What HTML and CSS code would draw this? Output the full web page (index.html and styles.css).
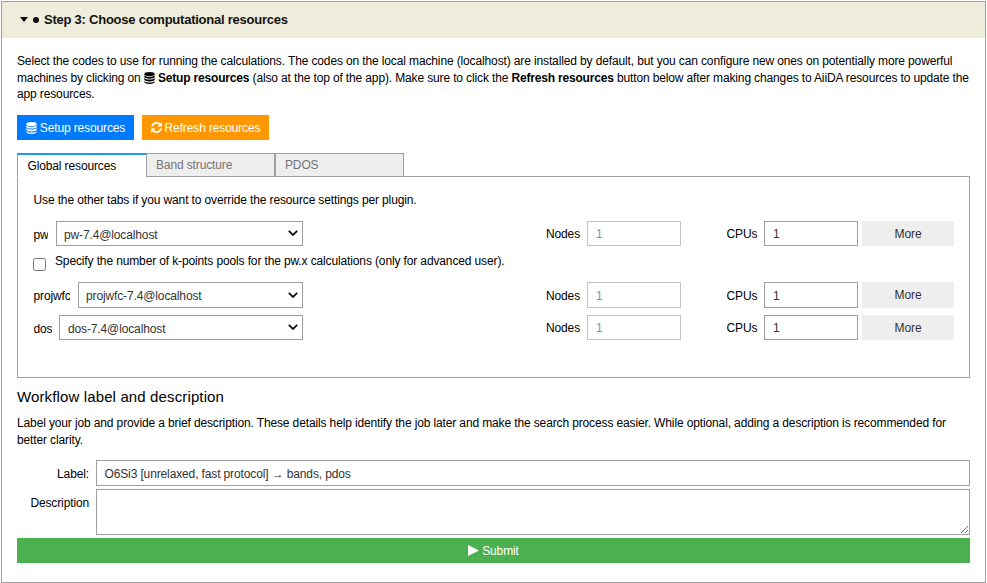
FILE: index.html
```html
<!DOCTYPE html>
<html lang="en">
<head>
<meta charset="utf-8">
<title>Step 3: Choose computational resources</title>
<link rel="stylesheet" href="styles.css">
</head>
<body>
<svg width="0" height="0" class="sprite" aria-hidden="true">
  <symbol id="database" viewBox="0 0 12 12" preserveAspectRatio="none">
    <ellipse cx="6" cy="2" rx="5.7" ry="2"/>
    <path d="M.3 3.3C2 5.3 10 5.3 11.700 3.300V4.900C11 7.200 1 7.200.3 4.900zM.3 6.100C2 8.100 10 8.100 11.700 6.100V7.700C11 10 1 10 .3 7.700zM.3 8.900C2 10.900 10 10.900 11.700 8.900V10C11 12.600 1 12.600.3 10z"/>
  </symbol>
  <symbol id="refresh" viewBox="0 0 1536 1536">
    <path d="M1511 928q0 5-1 7-64 268-268 434.500T764 1536q-146 0-282.500-55T238 1324l-129 129q-19 19-45 19t-45-19-19-45V960q0-26 19-45t45-19h448q26 0 45 19t19 45-19 45l-137 137q71 66 161 102t187 36q134 0 250-65t186-179q11-17 53-117 8-23 30-23h192q13 0 22.500 9.500t9.500 22.500zM1536 128v448q0 26-19 45t-45 19h-448q-26 0-45-19t-19-45 19-45l138-138Q969 256 768 256q-134 0-250 65T332 500q-11 17-53 117-8 23-30 23H50q-13 0-22.500-9.500T18 608v-7q65-268 270-434.500T768 0q146 0 284 55.500T1297 212l130-129q19-19 45-19t45 19 19 45z"/>
  </symbol>
  <symbol id="chevron" viewBox="0 0 10 6">
    <path d="M.8.8 5 5 9.200.8" fill="none" stroke="#111" stroke-width="1.800"/>
  </symbol>
</svg>
<section class="step">
  <header class="step-head">
    <svg class="caret" viewBox="0 0 8 5"><path d="M0 0h8L4 5z"/></svg>
    <span class="dot"></span>
    <span class="title">Step 3: Choose computational resources</span>
  </header>
  <div class="step-body">
    <p class="intro">
      <span class="line">Select the codes to use for running the calculations. The codes on the local machine (localhost) are installed by default, but you can configure new ones on potentially more powerful</span>
      <span class="line second">machines by clicking on <svg class="db"><use href="#database"/></svg> <b>Setup resources</b> (also at the top of the app). Make sure to click the <b>Refresh resources</b> button below after making changes to AiiDA resources to update the</span>
      <span class="line">app resources.</span>
    </p>
    <div class="actions">
      <button class="btn blue"><svg class="db"><use href="#database"/></svg><span>Setup resources</span></button>
      <button class="btn orange"><svg class="rf"><use href="#refresh"/></svg><span>Refresh resources</span></button>
    </div>
    <div class="tabs">
      <div class="tab active">Global resources</div>
      <div class="tab">Band structure</div>
      <div class="tab">PDOS</div>
    </div>
    <div class="panel">
      <p class="hint">Use the other tabs if you want to override the resource settings per plugin.</p>
      <div class="row">
        <div class="code"><label class="l-pw">pw</label><div class="pick"><select><option>pw-7.4@localhost</option></select><svg class="chev"><use href="#chevron"/></svg></div></div>
        <label class="nodes">Nodes</label><input class="num" value="1" disabled>
        <label class="cpus">CPUs</label><input class="num" value="1">
        <button class="more">More</button>
      </div>
      <div class="check"><input type="checkbox"><span>Specify the number of k-points pools for the pw.x calculations (only for advanced user).</span></div>
      <div class="row tall">
        <div class="code"><label class="l-projwfc">projwfc</label><div class="pick"><select><option>projwfc-7.4@localhost</option></select><svg class="chev"><use href="#chevron"/></svg></div></div>
        <label class="nodes">Nodes</label><input class="num" value="1" disabled>
        <label class="cpus">CPUs</label><input class="num" value="1">
        <button class="more">More</button>
      </div>
      <div class="row last">
        <div class="code"><label class="l-dos">dos</label><div class="pick"><select><option>dos-7.4@localhost</option></select><svg class="chev"><use href="#chevron"/></svg></div></div>
        <label class="nodes">Nodes</label><input class="num" value="1" disabled>
        <label class="cpus">CPUs</label><input class="num" value="1">
        <button class="more">More</button>
      </div>
    </div>
    <h4>Workflow label and description</h4>
    <p class="about">
      <span class="line">Label your job and provide a brief description. These details help identify the job later and make the search process easier. While optional, adding a description is recommended for</span>
      <span class="line">better clarity.</span>
    </p>
    <div class="field"><label>Label:</label><input value="O6Si3 [unrelaxed, fast protocol] → bands, pdos"></div>
    <div class="field area"><label>Description</label><textarea></textarea></div>
    <button class="submit"><svg class="play" viewBox="0 0 11 11"><path d="M0 0 11 5.500 0 11z"/></svg><span>Submit</span></button>
  </div>
</section>
</body>
</html>
```
FILE: styles.css
```css
* { box-sizing: border-box; }
body { margin: 0; background: #fff; color: #000; font: 12px/17px "Liberation Sans", Arial, sans-serif; letter-spacing: -0.13px; }
p, h4 { margin: 0; }
button, input, select, textarea { font: inherit; letter-spacing: inherit; border-radius: 0; margin: 0; }
.sprite { display: block; height: 0; }
.step { margin: 1px 1px 0; border: 1px solid #9e9e9e; height: 582px; width: 985px; }
.step-head { height: 36px; background: #eeecda; display: flex; align-items: center; padding-left: 18px; color: #111; }
.title { font-size: 13px; font-weight: bold; letter-spacing: -0.24px; padding-bottom: 2px; }
.caret { width: 8px; height: 5px; margin: 0 5px 1px 0; }
.dot { width: 6px; height: 6px; border-radius: 50%; background: #111; margin: 0 5px 0 0; }
.step-body { padding: 15px 15px 0; }
.line { display: block; white-space: nowrap; }
.second { letter-spacing: -0.137px; }
.second b { letter-spacing: -0.18px; }
.intro { height: 62px; line-height: 16.5px; }
.db { width: 11px; height: 12px; vertical-align: -2px; fill: currentColor; }
.actions { display: flex; gap: 8px; }
.btn { height: 25px; border: 0; padding: 1px 0 0; color: #fff; display: flex; align-items: center; justify-content: center; gap: 3px; white-space: nowrap; }
.btn svg { margin-bottom: 1px; }
.blue { background: #007bff; width: 117px; }
.orange { background: #ff9800; width: 127px; }
.rf { width: 11px; height: 11px; fill: currentColor; }
.tabs { display: flex; margin-top: 13px; height: 24px; position: relative; }
.tab { width: 129px; height: 24px; border: 1px solid #9e9e9e; background: #eee; color: #757575; padding: 3px 9px; }
.tab.active { background: #fff; color: #000; border-top: 2px solid #2196f3; border-bottom-color: #fff; border-right: 0; padding: 3px 9.500px; }
.panel { height: 202px; margin-top: -1px; border: 1px solid #9e9e9e; padding: 15px 15px 0 16px; }
.hint { height: 29px; margin-left: -0.5px; }
.row { display: flex; align-items: center; height: 25px; }
.row.tall { height: 26px; }
.row.last { margin-top: 7px; }
.code { display: flex; width: 269px; align-items: stretch; height: 100%; }
.code label { line-height: 28px; margin-left: -0.5px; margin-right: 8px; overflow: hidden; }
.l-pw { width: 14.5px; }
.l-projwfc { width: 36.5px; }
.code .l-dos { width: 18.5px; margin-right: 7px; }
.pick { flex: 1; display: grid; align-items: center; }
.pick > * { grid-area: 1 / 1; }
select { appearance: none; width: 100%; height: 100%; border: 1px solid #9e9e9e; background: #fff; color: #333; padding: 3px 7px 0; }
.row.last select { padding-left: 8px; }
.chev { width: 10px; height: 6px; justify-self: end; margin: 0 5px 1px 0; pointer-events: none; }
.nodes, .cpus { padding-top: 1px; }
.tall .nodes, .tall .cpus { padding-top: 2px; }
.nodes { margin-left: 243px; width: 41px; }
.cpus { margin-left: 45.500px; width: 37.500px; }
.num { width: 94px; height: 100%; border: 1px solid #9e9e9e; padding: 1px 8px 0; background: #fff; color: #333; }
.num:disabled { border-color: #c4c4c4; color: #8e8e8e; }
.more { width: 92px; height: 100%; border: 0; background: #eee; color: #333; margin-left: 4px; padding: 1px 0 0; letter-spacing: -0.1px; }
.check { height: 36px; display: flex; padding-top: 7px; }
.check input { width: 13px; height: 13px; margin: 5px 9px 0 -1px; }
h4 { font-size: 15px; line-height: 20px; font-weight: normal; letter-spacing: 0.13px; margin-top: 9px; }
.about { margin-top: 8px; height: 45px; line-height: 17px; }
.field { display: flex; height: 26px; margin-bottom: 3px; }
.field label { width: 72px; margin-right: 7px; text-align: right; line-height: 28px; }
.field input, .field textarea { flex: 1; border: 1px solid #9e9e9e; padding: 2px 7.500px 0; color: #333; background: #fff; }
.field.area { height: 46px; }
.submit { width: 100%; height: 25px; border: 0; background: #4caf50; color: #fff; display: flex; align-items: center; justify-content: center; gap: 3px; padding: 1px 0 0; }
.play { width: 11px; height: 11px; fill: #fff; margin-bottom: 1px; }
```
